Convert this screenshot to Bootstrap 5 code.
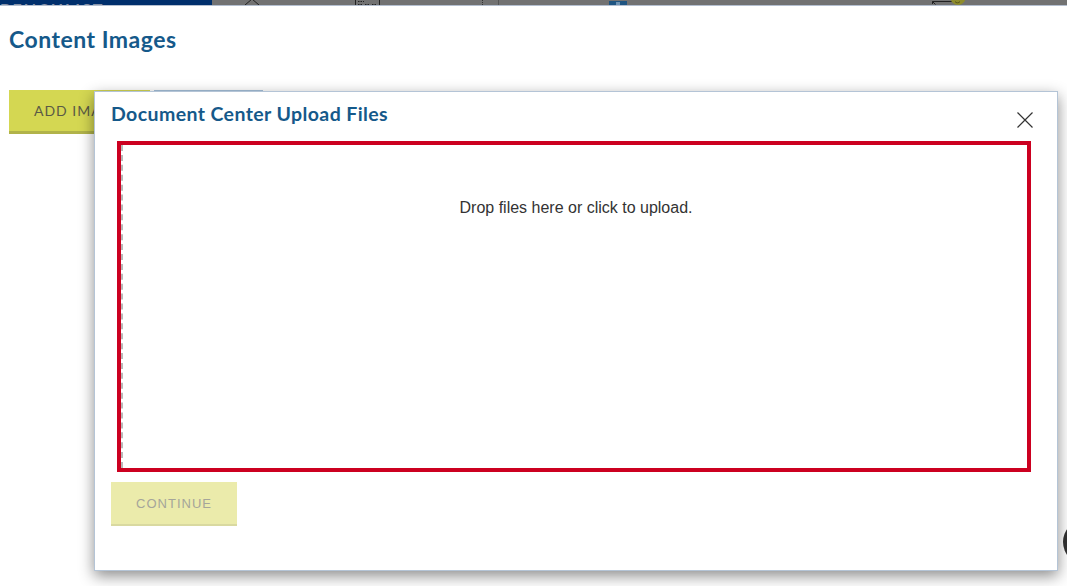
<!DOCTYPE html>
<html lang="en">
<head>
<meta charset="utf-8">
<title>Content Images</title>
<link rel="stylesheet" href="https://cdn.jsdelivr.net/npm/bootstrap@5.3.0/dist/css/bootstrap.min.css">
<style>
html, body { height: 100%; overflow: hidden; background: #fff; }
.page-frame { width: 1067px; height: 586px; position: relative; overflow: hidden; }
.top-strip { height: 6px; background: #727272; border-bottom: 1px solid #b4bfd0; overflow: hidden; position: relative; }
.brand-strip { width: 212px; height: 5px; background: #002f6c; color: #8a94a8; font: 700 16px/18px "Lato", sans-serif; letter-spacing: 2px; overflow: hidden; }
.strip-art { position: absolute; left: 0; top: 0; }
.content-area { padding: 18px 9px 0; }
.page-title { font: 700 23px/30px "Lato", sans-serif; letter-spacing: .5px; color: #15598a; margin: 0 0 36px; }
.olive-btn { background: #d4d752; color: #5a5a45; border: 0; border-bottom: 3px solid #b1b34a; border-radius: 0; width: 141px; height: 44px; font: 400 14px "Lato", sans-serif; letter-spacing: 1px; text-align: left; padding: 0 0 0 25px; }
.ghost-btn { width: 109px; height: 44px; border-top: 2px solid #a5c0da; }
.upload-modal { position: absolute; left: 94px; top: 91px; width: 964px; height: 480px; background: #fff; border: 1px solid #b4c4d6; box-shadow: 0 5px 14px rgba(0,0,0,.45); padding: 0 28px 0 16px; }
.modal-heading { font: 700 19.5px/24px "Lato", sans-serif; letter-spacing: .4px; color: #15598a; margin: 0; padding-top: 10px; height: 49px; }
.close-x { position: absolute; left: 922px; top: 20px; width: 16px; height: 16px; border: 0; background: none; padding: 0; display: block; }
.drop-box { margin-left: 6px; width: 914px; height: 331px; border: 4px solid #cc0020; padding: 53px 0 0 4px; text-align: center; position: relative; font: 400 16px/20px "Liberation Sans", sans-serif; color: #333; }
.drop-box::before { content: ""; position: absolute; left: 0; top: 0; bottom: 0; border-left: 2px dashed #b9b9b9; }
.continue-btn { margin-top: 10px; width: 126px; height: 44px; background: #ebebab; border: 0; border-bottom: 2px solid #d9d9a0; border-radius: 0; color: #a5a59a; font: 400 13px "Liberation Sans", sans-serif; letter-spacing: 1px; padding: 0; display: block; }
.chat-dot { position: absolute; left: 1063px; top: 520px; width: 44px; height: 44px; border-radius: 50%; background: #333; }
</style>
</head>
<body>
<div class="page-frame">
  <div class="top-strip">
    <div class="brand-strip">BENCHLIST</div>
    <svg class="strip-art" width="1067" height="5" viewBox="0 0 1067 5" aria-hidden="true">
      <path d="M245 5l7-6 7 6" fill="none" stroke="#222" stroke-width="1"/>
      <path d="M355.500 0v5M379.500 0v5" stroke="#222"/>
      <path d="M358 1.500h6M358 4.500h5M365 4.500h5M372 4.500h5" stroke="#222" stroke-dasharray="1.500 1"/>
      <path d="M482.500 0v5" stroke="#333" stroke-dasharray="1 1"/>
      <path d="M498.500 0v5" stroke="#555"/>
      <rect x="609" y="1" width="18" height="5" fill="#1f5582"/>
      <rect x="616" y="2" width="4" height="3" fill="#6f93b3"/>
      <path d="M932.500 4V1.500H953M932.500 1.500l3 3" fill="none" stroke="#222"/>
      <circle cx="958" cy="-2.500" r="7.500" fill="#8e8c2c"/>
      <path d="M955 1.500a3 3 0 0 0 5 0" fill="none" stroke="#55531c"/>
    </svg>
  </div>
  <div class="content-area">
    <h1 class="page-title">Content Images</h1>
    <div class="d-flex gap-1">
      <button type="button" class="olive-btn">ADD IMAGES</button>
      <div class="ghost-btn"></div>
    </div>
  </div>
  <div class="chat-dot"></div>
  <div class="upload-modal">
    <h2 class="modal-heading">Document Center Upload Files</h2>
    <button type="button" class="close-x" aria-label="Close">
      <svg class="d-block" width="16" height="16" viewBox="0 0 16 16"><path d="M.5.500l15 15M15.500.500l-15 15" stroke="#333" stroke-width="1.200" fill="none"/></svg>
    </button>
    <div class="drop-box">Drop files here or click to upload.</div>
    <button type="button" class="continue-btn" disabled>CONTINUE</button>
  </div>
</div>
<script src="https://cdn.jsdelivr.net/npm/bootstrap@5.3.0/dist/js/bootstrap.bundle.min.js"></script>
</body>
</html>
